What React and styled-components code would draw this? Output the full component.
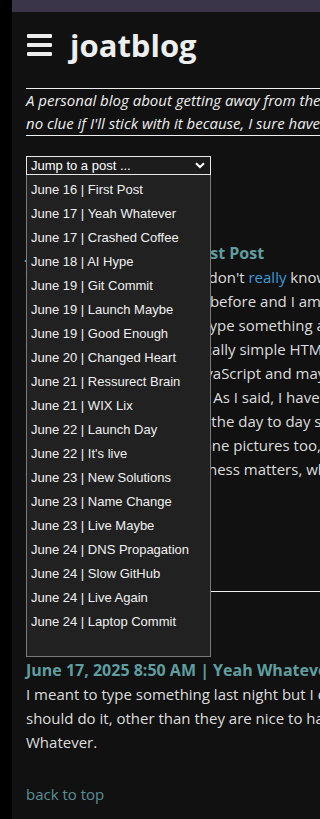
import styled, { createGlobalStyle } from "styled-components"

const posts = [
  "June 16 | First Post",
  "June 17 | Yeah Whatever",
  "June 17 | Crashed Coffee",
  "June 18 | AI Hype",
  "June 19 | Git Commit",
  "June 19 | Launch Maybe",
  "June 19 | Good Enough",
  "June 20 | Changed Heart",
  "June 21 | Ressurect Brain",
  "June 21 | WIX Lix",
  "June 22 | Launch Day",
  "June 22 | It's live",
  "June 23 | New Solutions",
  "June 23 | Name Change",
  "June 23 | Live Maybe",
  "June 24 | DNS Propagation",
  "June 24 | Slow GitHub",
  "June 24 | Live Again",
  "June 24 | Laptop Commit",
]

const App = () => {
  return (
    <>
      <GlobalStyle />
      <Page>
        <TopBar />
        <Main>
          <Header>
            <Burger aria-label="menu">
              <span />
              <span />
              <span />
            </Burger>
            <Title>joatblog</Title>
          </Header>
          <Tagline>
            A personal blog about getting away from the screen for a while, even though I have{"\n"}
            no clue if I'll stick with it because, I sure haven't so far with anything else.
          </Tagline>

          <JumpMenu>
            <SelectBox>
              <span>Jump to a post ...</span>
              <svg width="10" height="7" viewBox="0 0 10 7">
                <path d="M1 1.2 L5 5 L9 1.2" fill="none" stroke="#fff" strokeWidth="2" />
              </svg>
            </SelectBox>
            <ListBox>
              {posts.map((p) => (
                <Option key={p}>{p}</Option>
              ))}
            </ListBox>
          </JumpMenu>

          <Post>
            <PostTitle>June 16, 2025 9 PM | First Post</PostTitle>
            <Body>
              This is the first post, and I don't <BodyLink>really</BodyLink> know what I'm doing yet.{"\n"}
              I have never written blogs before and I am not sure I will be any good.{"\n"}
              I figured that I would just type something and see what happens next.{"\n"}
              This whole new site's basically simple HTML and CSS for now, nothing more.{"\n"}
              I want to go learn more JavaScript and maybe some other stuff too.{"\n"}
              Maybe a framework, later. As I said, I have no idea where this goes.{"\n"}
              I will probably write about the day to day stuff and what I break.{"\n"}
              I shall try to add some phone pictures too, once I figure out how.{"\n"}
              And also all the other business matters, whatever those are.
            </Body>
            <BackToTop href="#">back to top</BackToTop>
          </Post>

          <Divider />

          <Post>
            <PostTitle>June 17, 2025 8:50 AM | Yeah Whatever</PostTitle>
            <Body>
              I meant to type something last night but I didn't. I can't think of a reason why I{"\n"}
              should do it, other than they are nice to have later on, I guess. So yeah.{"\n"}
              Whatever.
            </Body>
            <BackToTop href="#">back to top</BackToTop>
          </Post>
        </Main>
      </Page>
    </>
  )
}

const GlobalStyle = createGlobalStyle`
  html, body {
    margin: 0;
    padding: 0;
    background: #000;
    overflow: hidden;
  }
  body {
    font-family: "Open Sans", "Noto Sans", sans-serif;
  }
`

const Page = styled.div`
  margin-left: 12px;
  width: calc(100vw - 12px);
  height: 819px;
  overflow: hidden;
  background: #111;
  color: #ddd;
`

const TopBar = styled.div`
  height: 12px;
  background: #3a3548;
`

const Main = styled.main`
  width: 730px;
  padding: 0 14px 40px 14px;
`

const Header = styled.header`
  display: flex;
  align-items: center;
  gap: 18px;
  height: 46px;
  margin-top: 10px;
`

const Burger = styled.div`
  display: flex;
  flex-direction: column;
  gap: 5px;
  width: 25px;
  margin-left: 1px;

  span {
    display: block;
    height: 4px;
    border-radius: 1px;
    background: #eee;
  }
`

const Title = styled.h1`
  margin: 0;
  font-size: 31px;
  font-weight: 700;
  color: #eee;
  line-height: 1;
`

const Tagline = styled.p`
  margin: 20px 0 0 0;
  border-top: 1px solid #eee;
  border-bottom: 1px solid #eee;
  font-style: italic;
  font-size: 15px;
  line-height: 23px;
  white-space: pre-line;
  color: #eee;
`

const JumpMenu = styled.div`
  position: relative;
  width: 185px;
  margin-top: 20px;
  font-family: "Liberation Sans", Arial, sans-serif;
  font-size: 13px;
`

const SelectBox = styled.div`
  box-sizing: border-box;
  height: 19px;
  border: 1px solid #e8e8e8;
  background: #1c1c1c;
  color: #fff;
  display: flex;
  align-items: center;
  justify-content: space-between;
  padding: 0 5px 0 4px;
`

const ListBox = styled.div`
  position: absolute;
  top: 19px;
  left: 0;
  box-sizing: border-box;
  width: 185px;
  height: 482px;
  padding-top: 3px;
  border: 1px solid #7a7a7a;
  border-top: none;
  background: #212121;
  z-index: 2;
`

const Option = styled.div`
  height: 24px;
  line-height: 24px;
  padding-left: 4px;
  color: #f0f0f0;
  white-space: nowrap;
`

const Post = styled.article`
  margin-top: 66px;
  font-size: 15px;
`

const PostTitle = styled.h2`
  margin: 0;
  font-size: 16px;
  font-weight: 700;
  line-height: 24px;
  color: #5f9ea0;
`

const Body = styled.p`
  margin: 0;
  line-height: 24px;
  white-space: pre-line;
  color: #ddd;
`

const BodyLink = styled.a`
  color: #3b9bdc;
  text-decoration: none;
`

const BackToTop = styled.a`
  display: block;
  margin-top: 28px;
  line-height: 24px;
  color: #5a8f96;
  text-decoration: none;
`

const Divider = styled.hr`
  margin: 58px 0 0 0;
  border: none;
  border-top: 1px solid #eee;
`

export default App
